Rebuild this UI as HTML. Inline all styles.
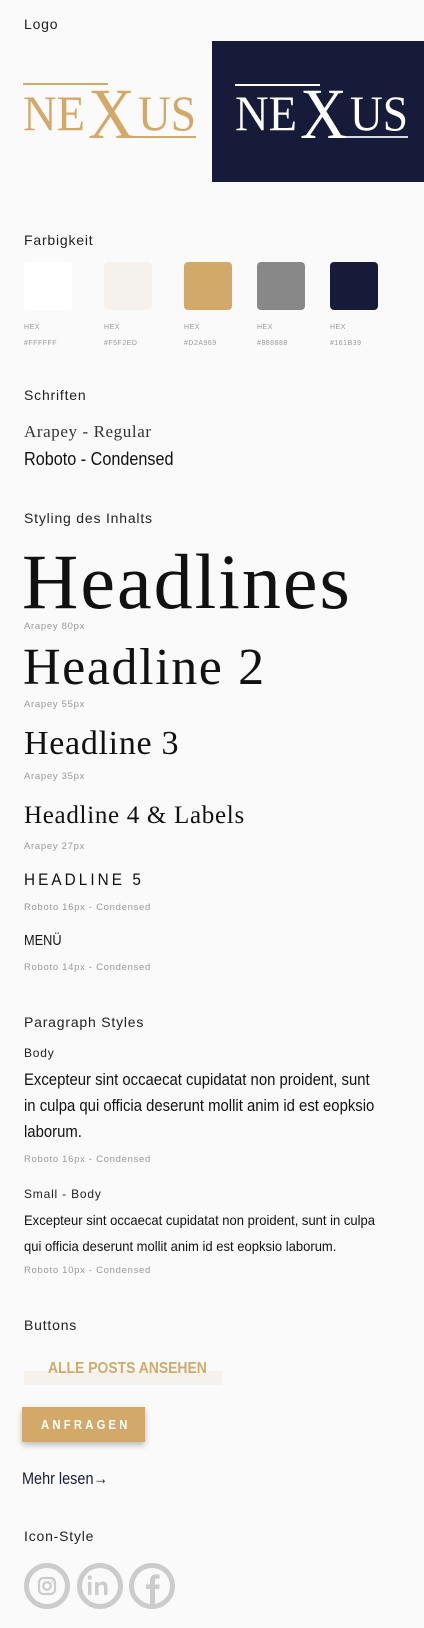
<!DOCTYPE html>
<html><head><meta charset="utf-8"><style>
*{margin:0;padding:0;box-sizing:border-box}
body{width:424px;height:1628px;background:#fafafa;position:relative;overflow:hidden;font-family:"Liberation Sans",sans-serif;color:#111}
.a{position:absolute;white-space:nowrap;line-height:1}
.lab{font-size:14px;font-weight:300;color:#222;letter-spacing:.8px}
.hx{font-size:7px;color:#999;letter-spacing:.5px}
.sm{font-size:9.5px;color:#999;letter-spacing:.7px}
.cond{font-family:"Liberation Sans",sans-serif;transform:scaleX(.9);transform-origin:0 0}
.ser{font-family:"Liberation Serif",serif;color:#111}
.sw{position:absolute;top:262px;width:48px;height:48px;border-radius:4px}
</style></head><body>
<div class="a lab" style="left:24px;top:17px">Logo</div>
<svg class="a" style="left:0;top:0" width="424" height="190">
 <g fill="#D2A969">
  <rect x="23" y="83" width="85" height="2"/>
  <rect x="118" y="136" width="78" height="2"/>
  <text x="23" y="130" font-family="Liberation Serif" font-size="50" textLength="62" lengthAdjust="spacingAndGlyphs">NE</text>
  <text x="88" y="138" font-family="Liberation Serif" font-size="72" textLength="47" lengthAdjust="spacingAndGlyphs">X</text>
  <text x="138" y="130" font-family="Liberation Serif" font-size="50" textLength="58" lengthAdjust="spacingAndGlyphs">US</text>
 </g>
 <rect x="212" y="41" width="212" height="141" fill="#161B39"/>
 <g fill="#fff">
  <rect x="235" y="84" width="85" height="2"/>
  <rect x="330" y="136" width="78" height="2" fill="#d8d8e0"/>
  <text x="235" y="130" font-family="Liberation Serif" font-size="50" textLength="62" lengthAdjust="spacingAndGlyphs">NE</text>
  <text x="300" y="138" font-family="Liberation Serif" font-size="72" textLength="47" lengthAdjust="spacingAndGlyphs">X</text>
  <text x="350" y="130" font-family="Liberation Serif" font-size="50" textLength="58" lengthAdjust="spacingAndGlyphs">US</text>
 </g>
</svg>
<div class="a lab" style="left:24px;top:233px">Farbigkeit</div>
<div class="sw" style="left:24px;background:#fff"></div>
<div class="sw" style="left:104px;background:#F5F2ED"></div>
<div class="sw" style="left:184px;background:#D2A969"></div>
<div class="sw" style="left:257px;background:#888888"></div>
<div class="sw" style="left:330px;background:#161B39"></div>
<div class="a hx" style="left:24px;top:324px">HEX</div><div class="a hx" style="left:24px;top:340px">#FFFFFF</div>
<div class="a hx" style="left:104px;top:324px">HEX</div><div class="a hx" style="left:104px;top:340px">#F5F2ED</div>
<div class="a hx" style="left:184px;top:324px">HEX</div><div class="a hx" style="left:184px;top:340px">#D2A969</div>
<div class="a hx" style="left:257px;top:324px">HEX</div><div class="a hx" style="left:257px;top:340px">#888888</div>
<div class="a hx" style="left:330px;top:324px">HEX</div><div class="a hx" style="left:330px;top:340px">#161B39</div>

<div class="a lab" style="left:24px;top:388px">Schriften</div>
<div class="a ser" style="left:24px;top:423px;font-size:17px;color:#333;letter-spacing:.6px">Arapey - Regular</div>
<div class="a cond" style="left:24px;top:450px;font-size:18px;color:#111">Roboto - Condensed</div>

<div class="a lab" style="left:24px;top:511px">Styling des Inhalts</div>
<div class="a ser" style="left:22px;top:543px;font-size:78px;letter-spacing:2px">Headlines</div>
<div class="a sm" style="left:24px;top:622px">Arapey 80px</div>
<div class="a ser" style="left:23px;top:642px;font-size:52px;letter-spacing:1.6px">Headline 2</div>
<div class="a sm" style="left:24px;top:700px">Arapey 55px</div>
<div class="a ser" style="left:24px;top:727px;font-size:34px;letter-spacing:.7px">Headline 3</div>
<div class="a sm" style="left:24px;top:772px">Arapey 35px</div>
<div class="a ser" style="left:24px;top:803px;font-size:25px;letter-spacing:.7px">Headline 4 &amp; Labels</div>
<div class="a sm" style="left:24px;top:842px">Arapey 27px</div>
<div class="a cond" style="left:24px;top:871px;font-size:17px;letter-spacing:3.4px;color:#111">HEADLINE 5</div>
<div class="a sm" style="left:24px;top:903px">Roboto 16px - Condensed</div>
<div class="a cond" style="left:24px;top:933px;font-size:15px;color:#111;transform:scaleX(.85)">MENÜ</div>
<div class="a sm" style="left:24px;top:963px">Roboto 14px - Condensed</div>

<div class="a lab" style="left:24px;top:1015px">Paragraph Styles</div>
<div class="a lab" style="left:24px;top:1047px;font-size:12px">Body</div>
<div class="a cond" style="left:24px;top:1067px;font-size:17px;line-height:26px;color:#111;transform:scaleX(.875)">Excepteur sint occaecat cupidatat non proident, sunt<br>in culpa qui officia deserunt mollit anim id est eopksio<br>laborum.</div>
<div class="a sm" style="left:24px;top:1155px">Roboto 16px - Condensed</div>
<div class="a lab" style="left:24px;top:1188px;font-size:12px">Small - Body</div>
<div class="a cond" style="left:24px;top:1207px;font-size:14px;line-height:26px;color:#111;transform:scaleX(.93)">Excepteur sint occaecat cupidatat non proident, sunt in culpa<br>qui officia deserunt mollit anim id est eopksio laborum.</div>
<div class="a sm" style="left:24px;top:1266px">Roboto 10px - Condensed</div>

<div class="a lab" style="left:24px;top:1318px">Buttons</div>
<div class="a" style="left:24px;top:1371px;width:198px;height:14px;background:#F5F2ED"></div>
<div class="a cond" style="left:48px;top:1361px;font-size:16px;font-weight:bold;color:#D2A969;transform:scaleX(.87)">ALLE POSTS ANSEHEN</div>
<div class="a" style="left:22px;top:1407px;width:123px;height:35px;background:#D2A969;box-shadow:0 3px 6px rgba(0,0,0,.25)"></div>
<div class="a cond" style="left:41px;top:1419px;font-size:12.5px;font-weight:bold;letter-spacing:3.6px;color:#fff">ANFRAGEN</div>
<div class="a cond" style="left:22px;top:1470px;font-size:17px;color:#161B39;transform:scaleX(.85)">Mehr lesen<span style="font-weight:bold">→</span></div>

<div class="a lab" style="left:24px;top:1529px">Icon-Style</div>
<svg class="a" style="left:0;top:1560px" width="200" height="55" fill="none" stroke="#ccc">
 <circle cx="47" cy="26" r="20.5" stroke-width="5"/>
 <circle cx="100" cy="26" r="20.5" stroke-width="5"/>
 <circle cx="152" cy="26" r="20.5" stroke-width="5"/>
 <rect x="39" y="18" width="16" height="16" rx="4.5" stroke-width="2.2"/>
 <circle cx="47" cy="26" r="3.8" stroke-width="2.2"/>
 <circle cx="51.8" cy="21.2" r=".8" fill="#ccc" stroke="none"/>
 <g fill="#ccc" stroke="none">
  <rect x="88" y="22" width="3.5" height="13"/>
  <circle cx="89.7" cy="17.5" r="2.2"/>
  <path d="M95 22h3.3v2c1-1.5 2.6-2.4 4.6-2.4 3.4 0 4.6 2.1 4.6 5.5V35h-3.5v-7.3c0-1.8-.5-3-2.3-3-1.9 0-3.2 1.3-3.2 3.4V35H95z"/>
  <path d="M150 46V29h-4v-4.5h4v-3.5c0-4.4 2.5-6.6 6.2-6.6 1.6 0 3 .1 3.4.2v4h-2.3c-1.9 0-2.3.9-2.3 2.2v3.7h4.6l-.6 4.5h-4V46z"/>
 </g>
</svg>
</body></html>
